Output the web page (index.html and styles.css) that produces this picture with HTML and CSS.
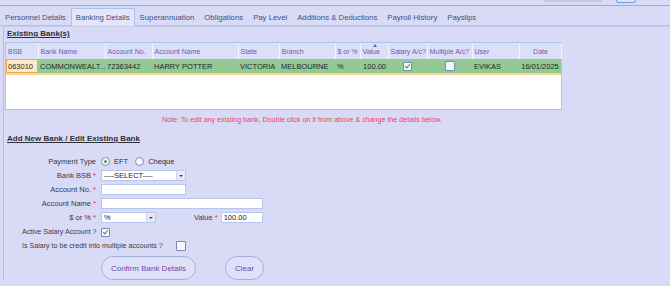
FILE: index.html
```html
<!DOCTYPE html>
<html lang="en">
<head>
    <meta charset="UTF-8">
    <title>Banking Details</title>
    <link rel="stylesheet" href="styles.css">
</head>
<body>
    <div class="topbar">
        <span class="top-field"></span>
        <span class="top-btn"></span>
    </div>

    <ul class="tabs">
        <li>Personnel Details</li>
        <li class="active">Banking Details</li>
        <li>Superannuation</li>
        <li>Obligations</li>
        <li>Pay Level</li>
        <li>Additions &amp; Deductions</li>
        <li>Payroll History</li>
        <li>Payslips</li>
    </ul>

    <div class="panel">
        <h2 class="section-title">Existing Bank(s)</h2>

        <div class="grid">
            <table>
                <colgroup>
                    <col style="width:32px"><col style="width:67px"><col style="width:47px">
                    <col style="width:86px"><col style="width:41px"><col style="width:56px">
                    <col style="width:25px"><col style="width:28px"><col style="width:39px">
                    <col style="width:45px"><col style="width:47px"><col style="width:42px">
                </colgroup>
                <thead>
                    <tr>
                        <th>BSB</th>
                        <th>Bank Name</th>
                        <th>Account No.</th>
                        <th>Account Name</th>
                        <th>State</th>
                        <th>Branch</th>
                        <th>$ or %</th>
                        <th class="sorted">Value</th>
                        <th>Salary A/c?</th>
                        <th>Multiple A/c?</th>
                        <th>User</th>
                        <th class="center">Date</th>
                    </tr>
                </thead>
                <tbody>
                    <tr class="selected">
                        <td class="current">063010</td>
                        <td>COMMONWEALT...</td>
                        <td>72363442</td>
                        <td>HARRY POTTER</td>
                        <td>VICTORIA</td>
                        <td>MELBOURNE</td>
                        <td>%</td>
                        <td class="num">100.00</td>
                        <td class="center"><span class="check on"></span></td>
                        <td class="center"><span class="check big"></span></td>
                        <td>EVIKAS</td>
                        <td class="center">16/01/2025</td>
                    </tr>
                </tbody>
            </table>
        </div>

        <p class="note">Note: To edit any existing bank, Double click on it from above &amp; change the details below.</p>

        <h2 class="section-title">Add New Bank / Edit Existing Bank</h2>

        <div class="form">
            <div class="row">
                <label class="lbl">Payment Type</label>
                <div class="field">
                    <span class="radio on"></span><span class="opt">EFT</span>
                    <span class="radio"></span><span class="opt">Cheque</span>
                </div>
            </div>
            <div class="row">
                <label class="lbl">Bank BSB <b>*</b></label>
                <div class="field"><span class="select w84">----SELECT----<i></i></span></div>
            </div>
            <div class="row">
                <label class="lbl">Account No. <b>*</b></label>
                <div class="field"><span class="input w84"></span></div>
            </div>
            <div class="row">
                <label class="lbl">Account Name <b>*</b></label>
                <div class="field"><span class="input w161"></span></div>
            </div>
            <div class="row">
                <label class="lbl">$ or % <b>*</b></label>
                <div class="field">
                    <span class="select w54">%<i></i></span>
                    <label class="lbl-inline">Value <b>*</b></label>
                    <span class="input w41">100.00</span>
                </div>
            </div>
            <div class="row wide first">
                <label>Active Salary Account ?</label>
                <span class="check on"></span>
            </div>
            <div class="row wide">
                <label>Is Salary to be credit into multiple accounts ?</label>
                <span class="check big push"></span>
            </div>

            <div class="actions">
                <button class="pill confirm">Confirm Bank Details</button>
                <button class="pill clear">Clear</button>
            </div>
        </div>
    </div>
</body>
</html>
```

FILE: styles.css
```css
body {
    margin: 0;
    background: #d9dbf6;
    font-family: 'Liberation Sans', Arial, sans-serif;
    font-size: 7.5px;
    color: #2b2b3a;
    height: 286px;
    overflow: hidden;
}

/* strip at the very top */
.topbar {
    height: 5px;
    border-bottom: 1px solid #a3aacb;
    display: flex;
    justify-content: flex-end;
    align-items: flex-start;
    padding-right: 34px;
}

.top-field {
    width: 58px;
    height: 2px;
    background: #c8cad8;
    margin-right: 14px;
}

.top-btn {
    width: 18px;
    height: 2px;
    border: 1px solid #6f9fe0;
    border-top: none;
    border-radius: 0 0 3px 3px;
    background: #dce6fa;
}

/* tabs */
.tabs {
    list-style: none;
    margin: 2px 0 0 0;
    padding: 0;
    display: flex;
    height: 17px;
    border-bottom: 1px solid #a9c3ea;
}

.tabs li {
    padding: 0 4px;
    line-height: 17px;
    font-size: 7.75px;
    color: #3f4f80;
    border: 1px solid transparent;
    border-bottom: none;
}

.tabs li.active {
    background: #e3e6f9;
    border-color: #a9c3ea;
    border-radius: 2px 2px 0 0;
    margin-bottom: -1px;
    color: #44507a;
}

/* main panel */
.panel {
    margin: 0 0 0 3px;
    border-left: 1px solid #a9c3ea;
    border-top: 1px solid #c3cdf0;
    padding: 2px 0 0 1px;
}

.section-title {
    margin: 0 0 0 2px;
    font-size: 8px;
    font-weight: bold;
    text-decoration: underline;
    color: #2e2e36;
    line-height: 10px;
}

/* existing banks grid */
.grid {
    margin-top: 3px;
    width: 555px;
    height: 66px;
    border: 1px solid #a9c3ea;
    background: #fff;
}

.grid table {
    border-collapse: collapse;
    table-layout: fixed;
    width: 555px;
    font-size: 7.5px;
}

.grid th {
    background: #dcdff8;
    color: #7656ad;
    font-weight: normal;
    font-size: 7px;
    text-align: left;
    height: 16px;
    padding: 0 1px 0 2px;
    border-right: 1px solid #f2f3fd;
    white-space: nowrap;
    overflow: hidden;
}

.grid th.center,
.grid td.center {
    text-align: center;
}

.grid th.sorted {
    position: relative;
}

.grid th.sorted::before {
    content: "";
    position: absolute;
    top: 1px;
    left: 12px;
    border: 2px solid transparent;
    border-bottom: 3px solid #5a6aa8;
    border-top: none;
}

.grid td {
    background: #93c995;
    color: #1f2a1f;
    height: 14px;
    padding: 0 2px;
    white-space: nowrap;
    overflow: hidden;
    border-bottom: 2px solid #f6d98e;
}

.grid td.current {
    background: #fde9c6;
    box-shadow: inset 0 0 0 1px #f0a850;
}

.grid td.num {
    text-align: right;
}

/* checkboxes and radios */
.check {
    display: inline-block;
    width: 7px;
    height: 7px;
    border: 1px solid #7a88b8;
    background: #f6f7fd;
    border-radius: 1px;
    vertical-align: middle;
    position: relative;
}

.check.big {
    width: 8px;
    height: 8px;
}

.check.on::after {
    content: "";
    position: absolute;
    left: 2px;
    top: 0;
    width: 2px;
    height: 4px;
    border: solid #3f9a3f;
    border-width: 0 1.5px 1.5px 0;
    transform: rotate(40deg);
}

.radio {
    display: inline-block;
    width: 7px;
    height: 7px;
    border: 1px solid #7a88b8;
    border-radius: 50%;
    background: #f6f7fd;
    vertical-align: middle;
    position: relative;
}

.radio.on::after {
    content: "";
    position: absolute;
    left: 2px;
    top: 2px;
    width: 3px;
    height: 3px;
    border-radius: 50%;
    background: #3fa33f;
}

.note {
    margin: 5px 0 0 157px;
    color: #e8455c;
    font-size: 7.1px;
    line-height: 10px;
}

.note + .section-title {
    margin-top: 9px;
}

/* add / edit form */
.form {
    margin-top: 12px;
    display: flex;
    flex-direction: column;
    gap: 4px;
}

.row {
    display: flex;
    align-items: center;
    height: 10px;
}

.lbl {
    width: 91px;
    text-align: right;
    padding-right: 5px;
    color: #3a3a48;
}

.lbl b,
.lbl-inline b {
    color: #e0304a;
    font-weight: normal;
}

.field {
    display: flex;
    align-items: center;
}

.opt {
    margin: 0 7px 0 4px;
}

.input,
.select {
    display: inline-block;
    box-sizing: border-box;
    height: 11px;
    line-height: 9px;
    border: 1px solid #b7c7ec;
    background: #fff;
    padding: 0 2px;
    color: #222;
    position: relative;
}

.select i {
    position: absolute;
    right: 0;
    top: 0;
    width: 8px;
    height: 9px;
    background: #e6e9f8;
    border-left: 1px solid #d0d8f2;
}

.select i::after {
    content: "";
    position: absolute;
    left: 2px;
    top: 4px;
    border: 2px solid transparent;
    border-top: 2px solid #445;
    border-bottom: none;
}

.w84 { width: 85px; }
.w161 { width: 162px; }
.w54 { width: 55px; }
.w41 { width: 42px; }

.lbl-inline {
    margin: 0 3px 0 38px;
    color: #3a3a48;
}

.row.wide {
    padding-left: 17px;
    color: #3a3a48;
    font-size: 7.1px;
}

.row.wide.first {
    margin-top: 1px;
}

.row.wide label {
    margin-right: 4px;
}

.check.push {
    margin-left: 9px;
}

.actions {
    display: flex;
    gap: 29px;
    padding-left: 96px;
    margin-top: 1px;
}

.pill {
    height: 24px;
    padding: 0;
    border: 1px solid #a7b0da;
    border-radius: 12px;
    background: #dfe1f8;
    color: #6a4ca8;
    font-family: 'Liberation Sans', Arial, sans-serif;
    font-size: 8px;
}

.pill.confirm { width: 95px; }
.pill.clear { width: 39px; }
```
